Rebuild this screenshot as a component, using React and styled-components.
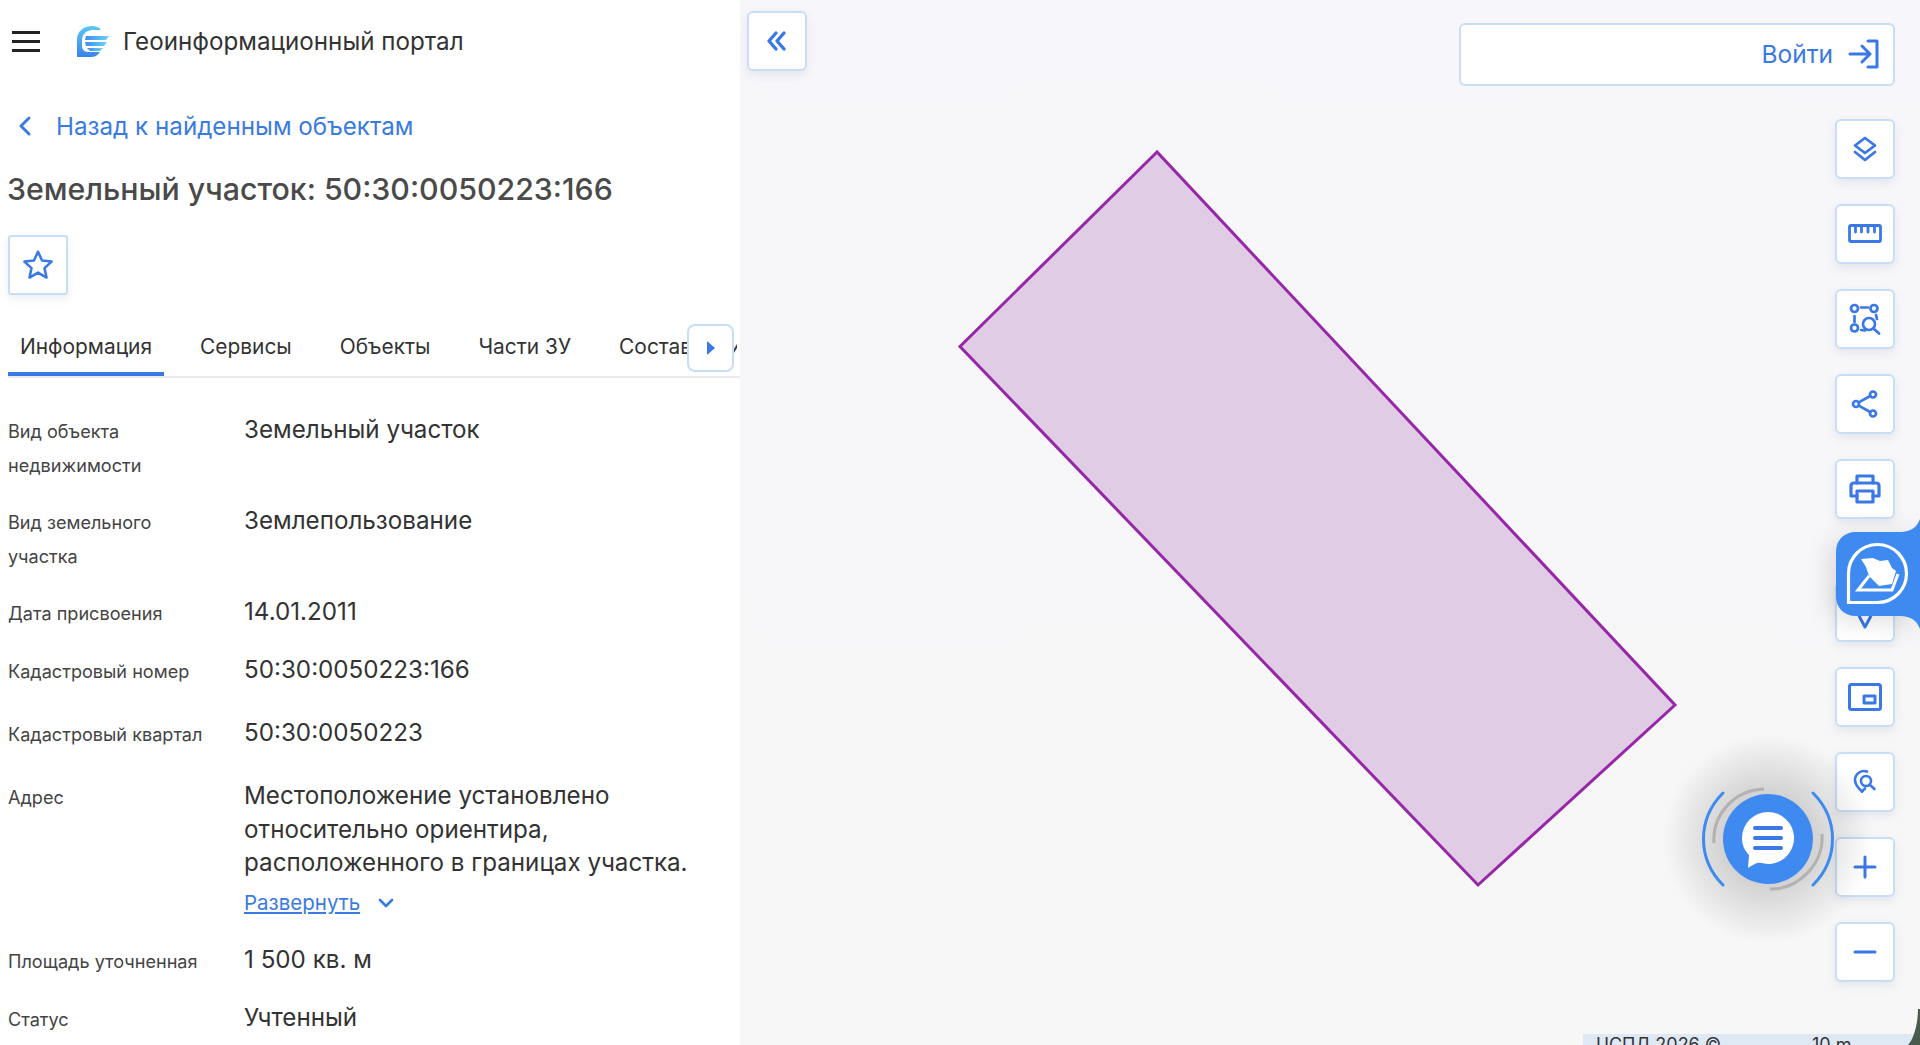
import React from "react";
import styled, { createGlobalStyle } from "styled-components";

const Global = createGlobalStyle`
  html, body { margin: 0; padding: 0; height: 100%; overflow: hidden; background: #fff; }
  * { box-sizing: border-box; }
  body { font-family: Inter, "Noto Sans", "Liberation Sans", sans-serif; }
`;

const Page = styled.div`
  display: grid;
  grid-template-columns: 740px 1fr;
  width: 1920px;
  height: 1045px;
  overflow: hidden;
`;

const Panel = styled.section`
  background: #fff;
  padding: 0 0 0 8px;
  overflow: hidden;
  height: 1045px;
`;

const Header = styled.header`
  display: flex;
  align-items: center;
  height: 82px;
  margin-left: -8px;
  padding-left: 12px;
`;

const Burger = styled.span`
  display: flex;
  flex-direction: column;
  gap: 6px;
  width: 28px;
  margin-right: 36px;
  & > i { display: block; height: 3px; background: #222; }
`;

const PortalTitle = styled.h1`
  margin: 0 0 0 13px;
  font-size: 24.2px;
  font-weight: 400;
  color: #333;
  white-space: nowrap;
`;

const BackLink = styled.a`
  display: flex;
  align-items: center;
  height: 88px;
  gap: 24px;
  padding-left: 10px;
  color: #3a7be0;
  font-size: 24.2px;
  white-space: nowrap;
`;

const ObjectTitle = styled.h2`
  margin: -1px 0 0 -1px;
  height: 40px;
  line-height: 40px;
  font-size: 30.3px;
  font-weight: 500;
  color: #4a4a4a;
  white-space: nowrap;
`;

const SquareButton = styled.button`
  display: flex;
  align-items: center;
  justify-content: center;
  width: 60px;
  height: 60px;
  padding: 0;
  background: #fff;
  border: 2px solid #c8ddf7;
  border-radius: 6px;
  box-shadow: 0 4px 10px rgba(70, 90, 130, 0.1);
  color: #3a78e6;
`;

const FavButton = styled(SquareButton)`
  margin-top: 26px;
  border-radius: 3px;
`;

const TabsWrap = styled.div`
  position: relative;
  margin-top: 2px;
  height: 81px;
  border-bottom: 2px solid #e9ebef;
`;

const TabStrip = styled.div`
  display: flex;
  gap: 24px;
  width: 729px;
  height: 79px;
  overflow: hidden;
`;

const Tab = styled.div`
  flex: none;
  width: ${(p) => (p.$width ? `${p.$width}px` : "auto")};
  padding: 28px 12px 0;
  height: 79px;
  line-height: 44px;
  font-size: 20.9px;
  color: #333;
  overflow: hidden;
  white-space: nowrap;
  border-bottom: ${(p) => (p.$active ? "4px solid #3a78e6" : "4px solid transparent")};
`;

const TabArrow = styled.button`
  position: absolute;
  left: 679px;
  top: 27px;
  width: 47px;
  height: 48px;
  display: flex;
  align-items: center;
  justify-content: center;
  background: #fff;
  border: 2px solid #c8ddf7;
  border-radius: 8px;
  padding: 0;
`;

const Rows = styled.div`
  display: flex;
  flex-direction: column;
  gap: 24px;
  margin-top: 35px;
`;

const Row = styled.div`
  display: grid;
  grid-template-columns: 236px 480px;
  min-height: ${(p) => p.$min || 34}px;
`;

const Label = styled.div`
  font-size: 18.1px;
  line-height: 33.5px;
  padding: 2px 30px 0 0;
  margin-bottom: -2px;
  color: #444;
`;

const Value = styled.div`
  font-size: 24.2px;
  line-height: 33.5px;
  color: #333;
`;

const Expand = styled.a`
  display: flex;
  align-items: center;
  gap: 18px;
  margin-top: 7px;
  height: 32px;
  font-size: 20.5px;
  color: #3a7be0;
  & > span { text-decoration: underline; }
`;

const MapArea = styled.main`
  position: relative;
  display: flex;
  flex-direction: column;
  padding: 11px 25px 0 7px;
  background: linear-gradient(#f7f6fa, #f7f7f7);
  height: 1045px;
  overflow: hidden;
`;

const MapShape = styled.svg`
  position: absolute;
  left: 0;
  top: 0;
  width: 1180px;
  height: 1045px;
`;

const TopRow = styled.div`
  position: relative;
  display: flex;
  align-items: flex-start;
  justify-content: space-between;
`;

const LoginBar = styled.button`
  display: flex;
  align-items: center;
  justify-content: flex-end;
  gap: 14px;
  width: 436px;
  height: 63px;
  margin-top: 12px;
  padding: 0 12px 2px 0;
  background: #fff;
  border: 2px solid #c8ddf7;
  border-radius: 6px;
  font-family: inherit;
  font-size: 24.5px;
  color: #3a78e6;
`;

const Toolbar = styled.nav`
  position: relative;
  display: flex;
  flex-direction: column;
  align-items: flex-end;
  gap: 25px;
  margin-top: 33px;
`;

const ToolButton = styled(SquareButton)`
  margin-top: ${(p) => p.$push || 0}px;
`;

const Widget = styled.svg`
  position: absolute;
  right: 0;
  top: 516px;
  width: 84px;
  height: 116px;
  filter: drop-shadow(-6px 6px 12px rgba(0, 0, 0, 0.12));
`;

const ChatWidget = styled.svg`
  position: absolute;
  left: 908px;
  top: 719px;
  width: 240px;
  height: 240px;
`;

const ScaleBar = styled.div`
  position: absolute;
  left: 843px;
  right: 5px;
  bottom: 0;
  height: 11px;
  overflow: hidden;
  background: #dfe9f6;
  display: flex;
  font-size: 18px;
  line-height: 22px;
  color: #333;
  padding-left: 13px;
  & > span { width: 216px; flex: none; }
`;

const Corner = styled.svg`
  position: absolute;
  right: 0;
  bottom: 0;
  width: 14px;
  height: 36px;
`;

const I = ({ w = 34, h = 34, sw = 2.6, vb = "0 0 34 34", children }) => (
  <svg width={w} height={h} viewBox={vb} fill="none" stroke="currentColor" strokeWidth={sw} strokeLinecap="round" strokeLinejoin="round">
    {children}
  </svg>
);

const logoIcon = (
  <svg width="34" height="33" viewBox="0 0 34 33">
    <defs>
      <linearGradient id="lg" x1="0" y1="0" x2="0" y2="1">
        <stop offset="0" stopColor="#5cc6f4" />
        <stop offset="1" stopColor="#3a84ec" />
      </linearGradient>
      <linearGradient id="lg2" x1="0" y1="0" x2="1" y2="0">
        <stop offset="0" stopColor="#3d8cee" />
        <stop offset="1" stopColor="#6fd3f5" />
      </linearGradient>
    </defs>
    <path d="M1 32V15C1 6 8 1 16 1c4 0 7 1 9 4H17C11 5 6 9 6 15v6c0 4 3 6 7 6h11c-2 3-5 5-9 5Z" fill="url(#lg)" />
    <path d="M10 11h23l-3 4H9Z" fill="url(#lg2)" />
    <path d="M9 17h22l-3 4H10Z" fill="url(#lg2)" />
    <path d="M11 23h16l-3 3H14Z" fill="url(#lg2)" />
  </svg>
);

const rows = [
  { l: "Вид объекта недвижимости", v: "Земельный участок" },
  { l: "Вид земельного участка", v: "Землепользование" },
  { l: "Дата присвоения", v: "14.01.2011" },
  { l: "Кадастровый номер", v: "50:30:0050223:166", min: 39 },
  { l: "Кадастровый квартал", v: "50:30:0050223", min: 39 },
];

export default function App() {
  return (
    <Page>
      <Global />
      <Panel>
        <Header>
          <Burger><i /><i /><i /></Burger>
          {logoIcon}
          <PortalTitle>Геоинформационный портал</PortalTitle>
        </Header>
        <BackLink>
          <I w={14} h={24} vb="0 0 14 24" sw={3}><path d="M11 4 3 12l8 8" /></I>
          Назад к найденным объектам
        </BackLink>
        <ObjectTitle>Земельный участок: 50:30:0050223:166</ObjectTitle>
        <FavButton aria-label="Избранное">
          <I w={34} h={34} vb="0 0 32 32" sw={2.4}>
            <path d="M16 3.500l3.800 8.300 9 1-6.700 6.100 1.900 8.900L16 23.200l-8 4.600 1.900-8.900-6.700-6.100 9-1Z" />
          </I>
        </FavButton>
        <TabsWrap>
          <TabStrip>
            <Tab $active>Информация</Tab>
            <Tab>Сервисы</Tab>
            <Tab>Объекты</Tab>
            <Tab>Части ЗУ</Tab>
            <Tab $width={86}>Состав</Tab>
            <Tab>История</Tab>
          </TabStrip>
          <TabArrow aria-label="Далее">
            <svg width="8" height="14" viewBox="0 0 8 14"><path d="M0 0l8 7-8 7Z" fill="#3a78e6" /></svg>
          </TabArrow>
        </TabsWrap>
        <Rows>
          {rows.map((r) => (
            <Row key={r.l} $min={r.min}>
              <Label>{r.l}</Label>
              <Value>{r.v}</Value>
            </Row>
          ))}
          <Row>
            <Label>Адрес</Label>
            <div>
              <Value>Местоположение установлено относительно ориентира, расположенного в границах участка.</Value>
              <Expand>
                <span>Развернуть</span>
                <I w={16} h={10} vb="0 0 16 10" sw={2.6}><path d="M2 2l6 6 6-6" /></I>
              </Expand>
            </div>
          </Row>
          <Row>
            <Label>Площадь уточненная</Label>
            <Value>1 500 кв. м</Value>
          </Row>
          <Row>
            <Label>Статус</Label>
            <Value>Учтенный</Value>
          </Row>
        </Rows>
      </Panel>

      <MapArea>
        <MapShape viewBox="740 0 1180 1045">
          <polygon points="1157,152 960,346.5 1478,885 1675,705" fill="#e1cce6" stroke="#9627a6" strokeWidth="3" strokeLinejoin="miter" />
        </MapShape>
        <TopRow>
          <SquareButton aria-label="Свернуть">
            <I w={24} h={24} vb="0 0 24 24" sw={3.4}>
              <path d="M11 4l-7 8 7 8M19 4l-7 8 7 8" />
            </I>
          </SquareButton>
          <LoginBar>
            Войти
            <I w={34} h={30} vb="0 0 34 30" sw={3}>
              <path d="M21 2h9v26h-9M3 15h20M15 7l8 8-8 8" />
            </I>
          </LoginBar>
        </TopRow>
        <Toolbar>
          <ToolButton>
            <I w={26} h={26} vb="0 0 26 26" sw={2.8}>
              <path d="M13 2l10 7.500L13 17 3 9.500Z" /><path d="M3 16l10 8 10-8" />
            </I>
          </ToolButton>
          <ToolButton>
            <I w={34} h={20} vb="0 0 34 20" sw={2.8}>
              <rect x="1.500" y="1.500" width="31" height="16" rx="1.500" />
              <path d="M7.500 2v6M13.500 2v6M20 2v6M26.500 2v6" />
            </I>
          </ToolButton>
          <ToolButton>
            <I w={32} h={32} vb="0 0 32 32" sw={2.7}>
              <circle cx="5.500" cy="5.500" r="3.500" /><circle cx="25" cy="5.500" r="3.500" /><circle cx="5.500" cy="25" r="3.500" />
              <path d="M12 4.500h7M5.500 13v6M27 12l1 4M12 27l4 .5" />
              <circle cx="20" cy="21" r="6" /><path d="M24.500 25.500l5.500 5" />
            </I>
          </ToolButton>
          <ToolButton>
            <I w={28} h={28} vb="0 0 28 28" sw={2.7}>
              <circle cx="5" cy="14" r="3" /><circle cx="22" cy="4.500" r="3" /><circle cx="22" cy="23.500" r="3" />
              <path d="M7.700 12.400l11.600-6.400M7.700 15.600l11.600 6.400" />
            </I>
          </ToolButton>
          <ToolButton>
            <I w={32} h={30} vb="0 0 32 30" sw={3.2}>
              <path d="M8 9V2h16v7" /><path d="M8 22H2V12c0-2 1-3 3-3h22c2 0 3 1 3 3v10h-6" /><rect x="8" y="17" width="16" height="11" />
            </I>
          </ToolButton>
          <ToolButton $push={38}>
            <I w={30} h={34} vb="0 0 30 34" sw={3}>
              <path d="M15 32C12 27 9 22 6 13a10 10 0 0 1 18 0c-3 9-6 14-9 19Z" /><circle cx="15" cy="13" r="4" />
            </I>
          </ToolButton>
          <ToolButton>
            <I w={34} h={28} vb="0 0 34 28" sw={3}>
              <rect x="1.500" y="1.500" width="31" height="25" rx="2" />
              <rect x="16" y="13" width="11" height="7" />
            </I>
          </ToolButton>
          <ToolButton>
            <I w={26} h={26} vb="0 0 26 26" sw={2.6}>
              <path d="M10 22.500C5 18 3 15 3 11a9 9 0 0 1 12-8.400" />
              <path d="M10 22.500l3-3" />
              <circle cx="14" cy="12" r="5" /><path d="M18 16l4.500 4" />
            </I>
          </ToolButton>
          <ToolButton>
            <I w={24} h={24} vb="0 0 24 24" sw={3}><path d="M12 2v20M2 12h20" /></I>
          </ToolButton>
          <ToolButton>
            <I w={24} h={24} vb="0 0 24 24" sw={3}><path d="M2 12h20" /></I>
          </ToolButton>
        </Toolbar>

        <Widget viewBox="0 0 84 116">
          <path d="M84 3c-3 8-9 13-20 13H20C8 16 0 24 0 36v44c0 12 8 20 20 20h44c11 0 17 5 20 13Z" fill="#3f8af0" />
          <path d="M12.500 86.500V57.500a29 29 0 1 1 29 29Z" fill="none" stroke="#fff" strokeWidth="3.200" />
          <path d="M25 43l12-1 7 3 8-1 4 8 4 3-4 13-13 2-10-10-3-9Z" fill="#fff" />
          <path d="M33 60l-11 14h34l6-16" fill="none" stroke="#fff" strokeWidth="3" />
        </Widget>

        <ChatWidget viewBox="0 0 240 240">
          <defs>
            <radialGradient id="glow">
              <stop offset="0.35" stopColor="#000" stopOpacity="0.17" />
              <stop offset="1" stopColor="#000" stopOpacity="0" />
            </radialGradient>
          </defs>
          <circle cx="120" cy="120" r="105" fill="url(#glow)" />
          <circle cx="120" cy="120" r="45" fill="#3f8af0" />
          <path d="M120 93a26 26 0 0 1 4 51.700c-7 1-12-2-15-.7-3 1-6 3-9 5l1-13c-5-5-7-11-7-17a26 26 0 0 1 26-26Z" fill="#fff" />
          <path d="M107 109h26M107 119h26M107 129h26" stroke="#3a78e6" strokeWidth="4" strokeLinecap="round" />
          <path d="M75 74C49 100 49 140 75 166M165 74c26 26 26 66 0 92" fill="none" stroke="#3f8af0" strokeWidth="3" strokeLinecap="round" />
          <path d="M66 124c-2-28 20-53 50-54M174 115c2 30-24 56-52 55" fill="none" stroke="#b2b2b2" strokeWidth="3" strokeLinecap="butt" />
        </ChatWidget>

        <ScaleBar><span>ЦСПД 2026 ©</span>10 m</ScaleBar>
        <Corner viewBox="0 0 14 36">
          <path d="M14 0v36H2C8 30 12 14 12 0Z" fill="#4a5a4c" />
        </Corner>
      </MapArea>
    </Page>
  );
}
